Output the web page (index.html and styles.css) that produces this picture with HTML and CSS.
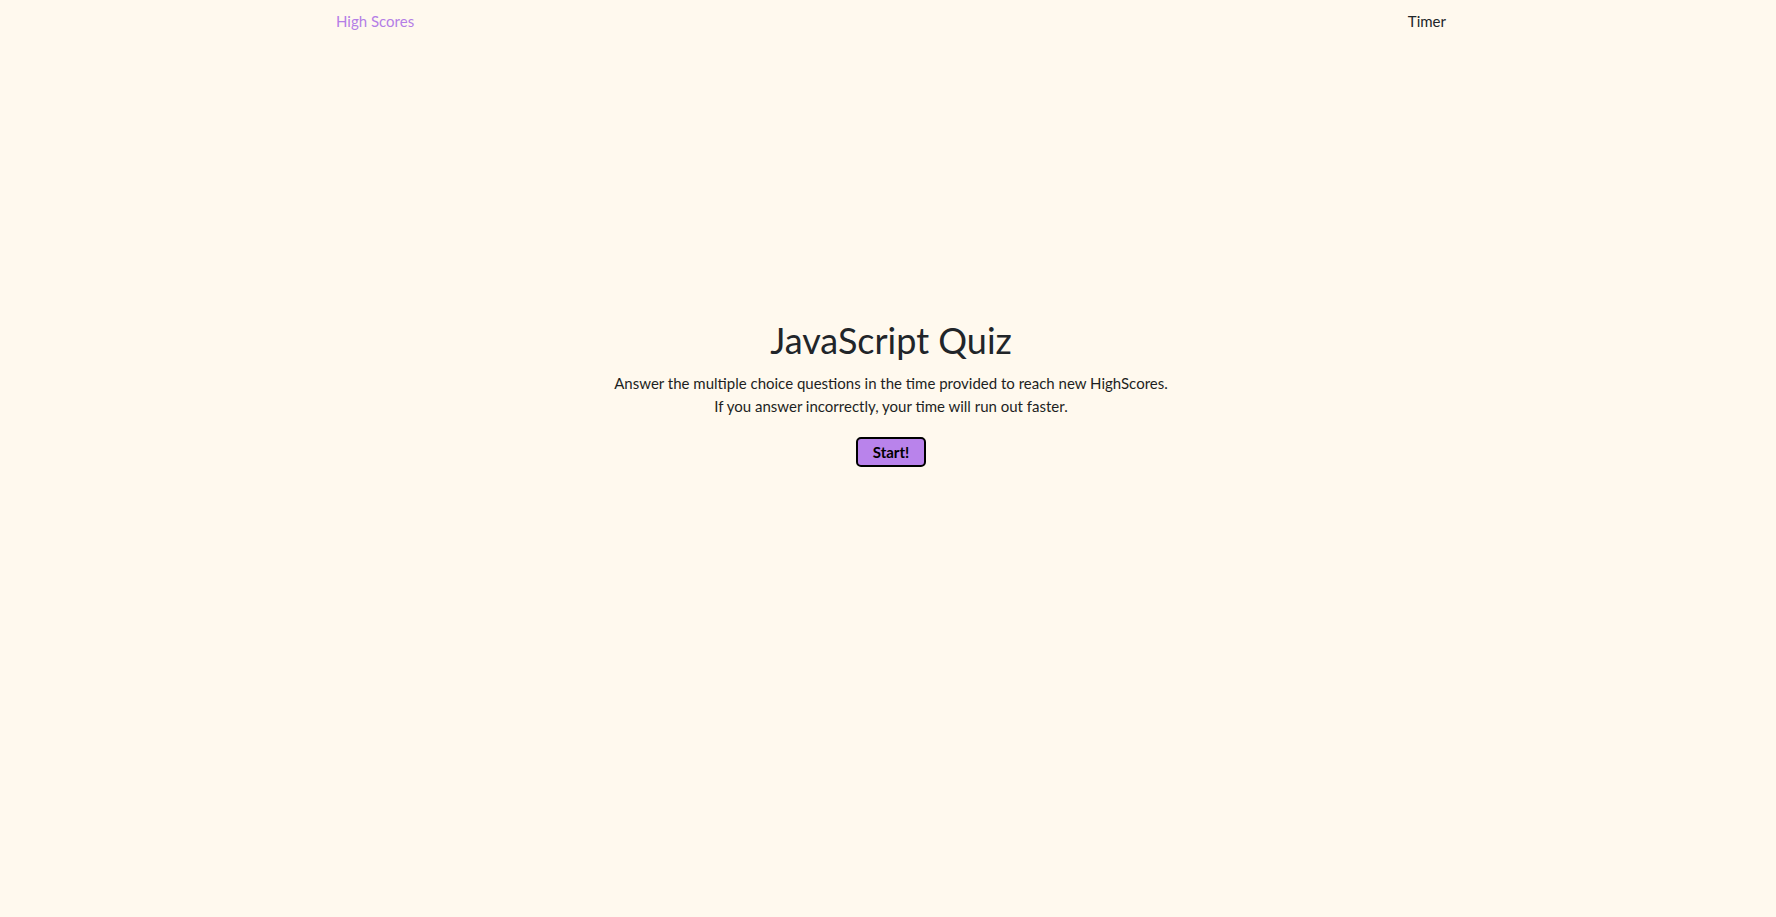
FILE: index.html
```html
<!DOCTYPE html>
<html lang="en">
<head>
<meta charset="utf-8">
<title>JavaScript Quiz</title>
<link rel="stylesheet" href="styles.css">
</head>
<body>
<header class="container topbar">
  <a class="high-scores" href="#">High Scores</a>
  <span class="timer">Timer</span>
</header>
<main class="container intro">
  <h1 class="title">JavaScript Quiz</h1>
  <p class="lead">Answer the multiple choice questions in the time provided to reach new HighScores.<br>If you answer incorrectly, your time will run out faster.</p>
  <button class="start-btn" type="button">Start!</button>
</main>
</body>
</html>
```
FILE: styles.css
```css
* { box-sizing: border-box; }
html, body { margin: 0; padding: 0; }
body {
  background: #fff9ee;
  color: #212529;
  font-family: "Lato", "Open Sans", sans-serif;
  font-size: 15px;
  line-height: 23px;
  min-height: 917px;
}
.container {
  width: 1116px;
  margin: 0 auto;
  padding-left: 6px;
}
.topbar {
  display: flex;
  justify-content: space-between;
  align-items: flex-start;
  padding-top: 9px;
  line-height: 24px;
}
.high-scores {
  color: #b47ee6;
  text-decoration: none;
  font-size: 15px;
}
.timer {
  color: #212529;
  font-size: 15px;
}
.intro {
  display: flex;
  flex-direction: column;
  align-items: center;
  text-align: center;
  padding-top: 286px;
}
.title {
  margin: 0 0 10px;
  font-size: 36px;
  font-weight: 400;
  line-height: 43px;
  color: #212529;
}
.lead {
  margin: 0 0 19px;
  font-size: 15px;
  line-height: 23px;
  color: #1d1f22;
}
.start-btn {
  font-family: "Lato", "Open Sans", sans-serif;
  font-size: 15px;
  font-weight: 700;
  line-height: 20px;
  color: #000;
  background: #b983eb;
  border: 2px solid #000;
  border-radius: 5px;
  padding: 3px 15px;
  cursor: pointer;
}
```
